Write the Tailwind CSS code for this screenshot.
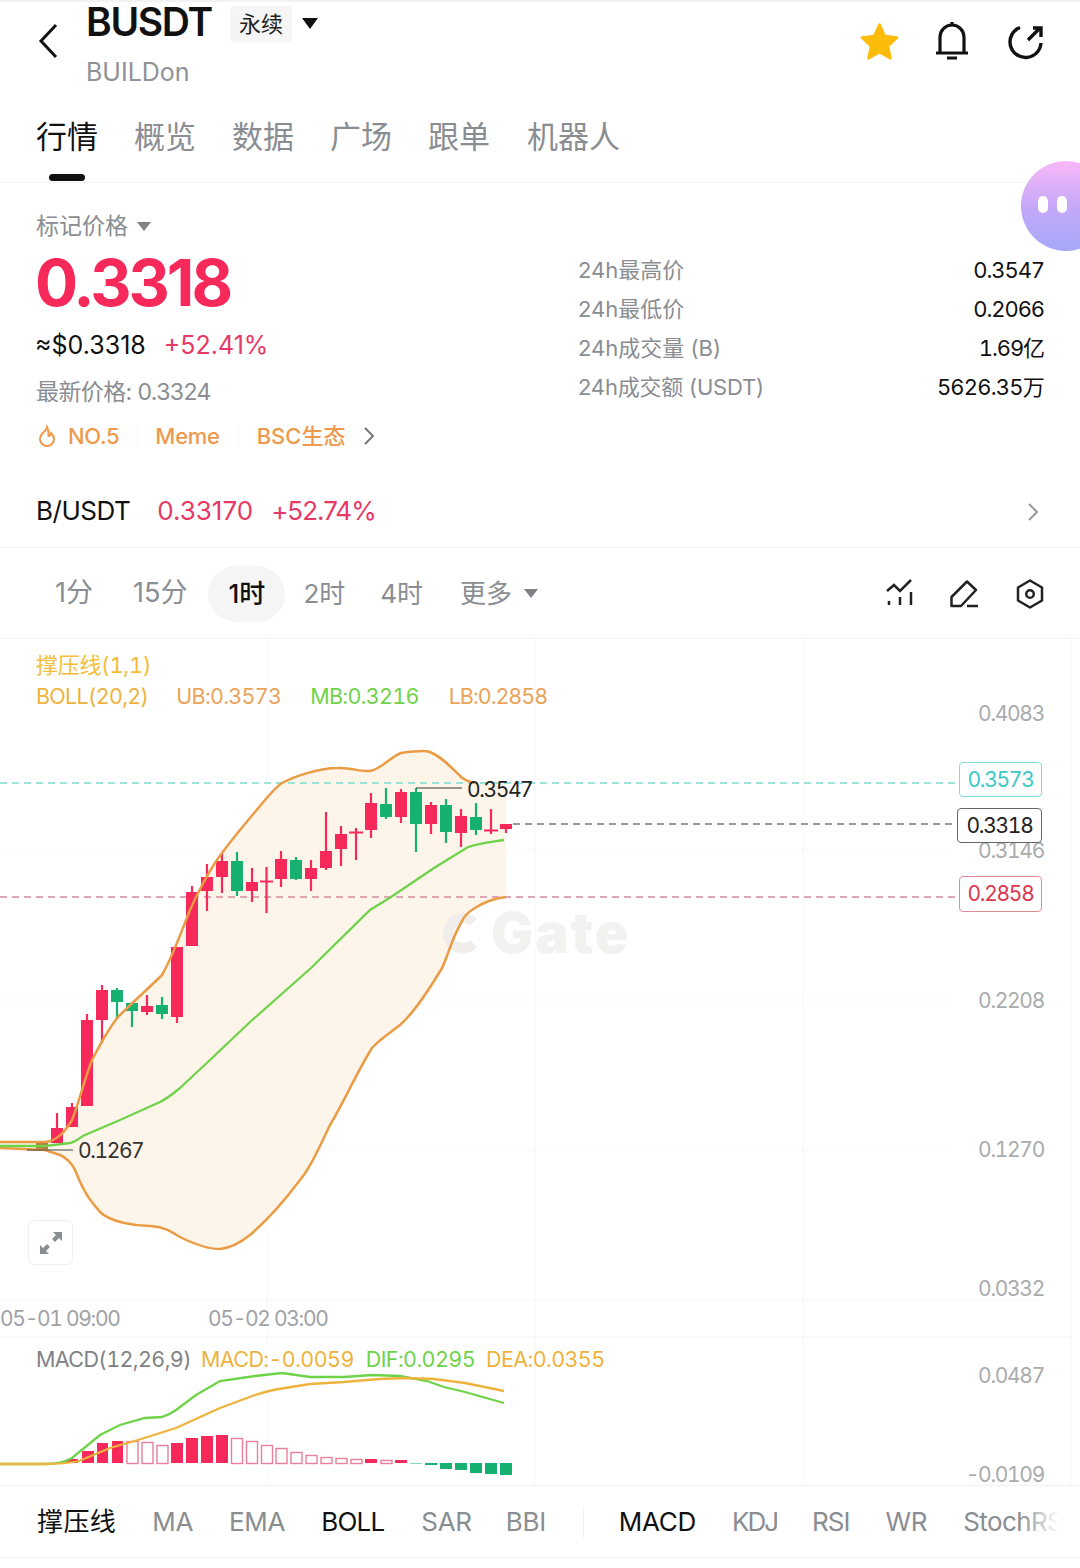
<!DOCTYPE html>
<html><head><meta charset="utf-8"><script src="https://cdn.jsdelivr.net/npm/@tailwindcss/browser@4"></script></head>
<body class="bg-white">
<div class="relative w-[1080px] h-[1568px] overflow-hidden bg-white text-[#111] font-['Inter','Noto_Sans_CJK_SC',sans-serif]">
  <div class="h-[2px] bg-[#f3f3f3]"></div>
  <!-- header -->
  <header class="h-[108px] flex items-start pl-[36px] pr-[36px]">
    <svg class="mt-[21px] w-[26px] h-[36px]" viewBox="0 0 26 36" fill="none" stroke="#111" stroke-width="3"><path d="M20 2 L5 18 L20 34"/></svg>
    <div class="ml-[24px] flex flex-col">
      <div class="flex items-center h-[40px]">
        <span class="text-[39px] font-semibold tracking-[-1.300px] leading-[40px]">BUSDT</span>
        <span class="ml-[18px] mt-[4px] w-[62px] h-[36px] rounded-[4px] bg-[#f5f5f5] text-[22px] flex items-center justify-center text-[#222]">永续</span>
        <span class="ml-[10px] mt-[3px] w-0 h-0 border-x-[8px] border-x-transparent border-t-[11px] border-t-[#111]"></span>
      </div>
      <span class="mt-[14px] text-[25px] text-[#8f9296] leading-[32px]">BUILDon</span>
    </div>
    <div class="ml-auto mt-[19px] flex items-center">
      <svg class="w-[41px] h-[40px]" viewBox="0 0 24 24" fill="#fcbc0a"><path d="M12 1.500 l3.200 6.900 7.400.9-5.500 5.100 1.500 7.400-6.600-3.700-6.600 3.700 1.500-7.400-5.500-5.100 7.400-.9z" stroke="#fcbc0a" stroke-width="1.500" stroke-linejoin="round"/></svg>
      <svg class="ml-[32px] w-[40px] h-[42px]" viewBox="0 0 40 42" fill="none" stroke="#111" stroke-width="3.200"><path d="M4 32h32M8 32V16a12 12 0 0 1 24 0v16" stroke-linejoin="round"/><path d="M20 1v4M15 37h10"/></svg>
      <svg class="ml-[36px] w-[36px] h-[36px]" viewBox="0 0 36 36" fill="none" stroke="#111" stroke-width="3.400"><path d="M12 3.500A15.500 15.500 0 1 0 33 19M20 16 32 4M25 4h8v9"/></svg>
    </div>
  </header>
  <!-- tabs -->
  <nav class="relative h-[73px] border-b border-[#f2f2f2] pl-[36px] flex gap-[36px] text-[31px] text-[#8a8d91]">
    <span class="text-[#111] leading-[54px]">行情</span><span class="leading-[54px]">概览</span><span class="leading-[54px]">数据</span><span class="leading-[54px]">广场</span><span class="leading-[54px]">跟单</span><span class="ml-[1px] leading-[54px]">机器人</span>
    <span class="absolute left-[49px] bottom-[1px] w-[36px] h-[7px] bg-[#111] rounded-[4px]"></span>
  </nav>
  <!-- price -->
  <section class="h-[290px] pl-[36px] pr-[36px] flex">
    <div class="w-[542px] flex flex-col">
      <div class="mt-[26px] flex items-center text-[23px] leading-[34px] text-[#8a8d91]">标记价格<span class="ml-[9px] w-0 h-0 border-x-[7px] border-x-transparent border-t-[9px] border-t-[#808285]"></span></div>
      <div class="mt-[7px] -ml-[1px] text-[64px] leading-[66px] font-bold text-[#f7295a] tracking-[-3px]">0.3318</div>
      <div class="mt-[11px] flex text-[25px] leading-[36px]"><span class="-ml-[1px]">≈$0.3318</span><span class="ml-[18px] text-[#e63a66]">+52.41%</span></div>
      <div class="mt-[12px] text-[23px] leading-[34px] text-[#8a8d91] tracking-[-0.600px]">最新价格: 0.3324</div>
      <div class="mt-[10px] flex items-center text-[22px] leading-[34px] text-[#ee9a4d] font-medium tracking-[-0.300px]">
        <svg class="ml-[2px] w-[18px] h-[22px] mr-[12px]" viewBox="0 0 18 22" fill="none" stroke="#ee9a4d" stroke-width="2"><path d="M9 2c0 4-7 6-7 12a7 7 0 0 0 14 0c0-3-2-5-3-6-.500 2-1.500 3-2.500 3 0-3 .500-6-1.500-9z"/></svg>
        <span>NO.5</span><span class="ml-[18px] w-px h-[24px] bg-[#f5f5f5]"></span><span class="ml-[17px]">Meme</span><span class="ml-[18px] w-px h-[24px] bg-[#f5f5f5]"></span><span class="ml-[18px] tracking-[0px]">BSC生态</span>
        <svg class="ml-[18px] w-[12px] h-[20px]" viewBox="0 0 12 20" fill="none" stroke="#777" stroke-width="2"><path d="M2 2l8 8-8 8"/></svg>
      </div>
    </div>
    <div class="flex-1 pt-[68px] flex flex-col text-[22px] leading-[39px]">
      <div class="flex justify-between"><span class="text-[#8a8d91]">24h最高价</span><span class="tabular-nums tracking-[-1.100px]">0.3547</span></div>
      <div class="flex justify-between"><span class="text-[#8a8d91]">24h最低价</span><span class="tabular-nums tracking-[-1.100px]">0.2066</span></div>
      <div class="flex justify-between"><span class="text-[#8a8d91]">24h成交量 (B)</span><span class="tabular-nums tracking-[-1.100px]">1.69亿</span></div>
      <div class="flex justify-between"><span class="text-[#8a8d91] tracking-[-0.200px]">24h成交额 (USDT)</span><span class="tabular-nums tracking-[-0.800px]">5626.35万</span></div>
    </div>
  </section>
  <!-- spot -->
  <section class="h-[75px] border-b border-[#f2f2f2] pl-[36px] pr-[42px] pt-[1px] flex items-center text-[26px]">
    <span class="tracking-[-0.500px]">B/USDT</span><span class="ml-[27px] text-[#e63a66]">0.33170</span><span class="ml-[18px] text-[#e63a66] tracking-[-1px]">+52.74%</span>
    <svg class="ml-auto mt-[2px] w-[10px] h-[18px]" viewBox="0 0 10 18" fill="none" stroke="#999" stroke-width="2"><path d="M1 1l8 8-8 8"/></svg>
  </section>
  <!-- timeframes -->
  <section class="h-[91px] border-b border-[#f2f2f2] pl-[36px] pr-[36px] pt-[1px] flex items-center text-[27px] text-[#8a8d91]">
    <span class="ml-[19px]">1分</span><span class="ml-[40px]">15分</span>
    <span class="ml-[21px] w-[77px] h-[56px] rounded-full bg-[#f5f5f5] text-[26px] text-[#111] font-medium flex items-center justify-center">1时</span>
    <span class="ml-[18px] text-[26px]">2时</span><span class="ml-[35px] text-[26px]">4时</span><span class="ml-[37px] text-[26px]">更多</span>
    <span class="ml-[12px] w-0 h-0 border-x-[7px] border-x-transparent border-t-[9px] border-t-[#808285]"></span>
    <div class="ml-auto flex items-center gap-[36px]">
      <svg class="w-[28px] h-[30px]" viewBox="0 0 28 30" fill="none" stroke="#222" stroke-width="2.500"><path d="M1 12l7-6 6 6 11-11M3 22v4M14 18v8M25 13v13"/></svg>
      <svg class="w-[30px] h-[30px]" viewBox="0 0 30 30" fill="none" stroke="#222" stroke-width="2.500" stroke-linejoin="round"><path d="M1.500 27V18L17 2.500l9 8.500L11 27zM17 27h11"/></svg>
      <svg class="w-[28px] h-[30px]" viewBox="0 0 28 30" fill="none" stroke="#222" stroke-width="2.500" stroke-linejoin="round"><path d="M14 1.500l12 7v13l-12 7-12-7v-13z"/><circle cx="14" cy="15" r="3.800"/></svg>
    </div>
  </section>
  <!-- chart -->
  <section class="relative h-[847px] border-b border-[#f2f2f2]">
    <svg class="absolute left-0 top-0" width="1080" height="847" viewBox="0 639 1080 847" fill="none">
      <path d="M267 639V1485M535 639V1485M803 639V1485M1071 639V1485M0 850H950M0 1000H950M0 1150H950M0 1300H1040M0 1337H1072" stroke="#f7f7f7"/>
      <path d="M0 1142L45 1142C58 1141 66 1130 72 1120C78 1105 85 1078 92 1060C100 1045 110 1025 120 1015C132 1003 152 985 162 975C172 958 180 935 190 910C200 888 212 866 222 853C235 835 250 818 265 800C272 792 276 787 282 783C295 776 320 768 337 768C350 767 360 772 370 771C380 770 392 756 401 753C415 751 425 750 430 752C442 757 452 768 461 777C468 782 490 784 506 784L506 897C495 898 482 903 475 908C468 912 463 918 461 923C452 938 448 956 442 968C430 988 415 1012 400 1025C390 1033 380 1039 372 1048C358 1070 345 1100 330 1125C318 1150 310 1168 300 1180C285 1200 270 1218 250 1235C240 1243 230 1248 220 1249C205 1249 190 1242 180 1237C170 1231 165 1227 150 1226C135 1226 110 1222 100 1212C90 1200 85 1195 75 1170C72 1163 65 1157 60 1155L45 1150L0 1148Z" fill="#fdf4ea"/>
      <circle cx="463" cy="933" r="15" stroke="#efeeea" stroke-width="10" stroke-dasharray="70 24" transform="rotate(45 463 933)"/>
      <text x="491" y="953" class="font-['Inter',sans-serif]" font-size="56" font-weight="900" fill="#f2f2f0" letter-spacing="2">Gate</text>
      <path d="M0 783H957" stroke="#7fdccf" stroke-width="1.500" stroke-dasharray="7 5"/>
      <path d="M0 897H957" stroke="#d48aa0" stroke-width="1.500" stroke-dasharray="7 5"/>
      <path d="M513 824H957" stroke="#777" stroke-width="1.500" stroke-dasharray="7 5"/>
      <!-- candles: red -->
      <rect x="36" y="1143" width="12" height="6" fill="#b07a40"/>
      <g stroke="#f7295a" stroke-width="2.200">
        <path d="M57 1113V1143M72 1103V1127M87 1014V1106M102 985V1043M147 995V1015M177 947V1023M192 886V946M207 864V911M222 853V893M252 868V902M266.500 867V913M281 851V887M311 860V891M326 812V870M341 826V866M356 828V860M371 793V838M401 789V823M431 802V834M461 809V847M491 809V834M506 824V833"/>
        <path d="M260 881.500H273M349 832.500H363M484 830.500H498"/>
      </g>
      <g fill="#f7295a">
        <rect x="51" y="1128" width="12" height="15"/><rect x="66" y="1107" width="12" height="20"/><rect x="81" y="1020" width="12" height="86"/><rect x="96" y="990" width="12" height="30"/><rect x="141" y="1006" width="12" height="6"/><rect x="171" y="947" width="12" height="70"/><rect x="186" y="892" width="12" height="54"/><rect x="201" y="877" width="12" height="14"/><rect x="216" y="861" width="12" height="16"/><rect x="246" y="882" width="12" height="9"/><rect x="275" y="859" width="12" height="20"/><rect x="305" y="868" width="12" height="11"/><rect x="320" y="851" width="12" height="17"/><rect x="335" y="834" width="12" height="15"/><rect x="365" y="803" width="12" height="27"/><rect x="395" y="792" width="12" height="25"/><rect x="425" y="805" width="12" height="19"/><rect x="455" y="816" width="12" height="17"/><rect x="500" y="824" width="12" height="5"/>
      </g>
      <g stroke="#16b070" stroke-width="2.200">
        <path d="M117 988V1018M132 1002V1027M162 997V1019M237 852V896M296 857V880M386 788V819M416 788V852M446 799V843M476 803V835"/>
      </g>
      <g fill="#16b070">
        <rect x="111" y="990" width="12" height="12"/><rect x="126" y="1003" width="12" height="8"/><rect x="156" y="1005" width="12" height="9"/><rect x="231" y="861" width="12" height="30"/><rect x="290" y="860" width="12" height="19"/><rect x="380" y="804" width="12" height="13"/><rect x="410" y="792" width="12" height="32"/><rect x="440" y="805" width="12" height="27"/><rect x="470" y="817" width="12" height="13"/>
      </g>
      <!-- boll lines -->
      <path d="M0 1142L45 1142C58 1141 66 1130 72 1120C78 1105 85 1078 92 1060C100 1045 110 1025 120 1015C132 1003 152 985 162 975C172 958 180 935 190 910C200 888 212 866 222 853C235 835 250 818 265 800C272 792 276 787 282 783C295 776 320 768 337 768C350 767 360 772 370 771C380 770 392 756 401 753C415 751 425 750 430 752C442 757 452 768 461 777C465 780 468 782 475 783" stroke="#ea9c45" stroke-width="2.500"/>
      <path d="M0 1148L45 1150L60 1155C65 1157 72 1163 75 1170C85 1195 90 1200 100 1212C110 1222 135 1226 150 1226C165 1227 170 1231 180 1237C190 1242 205 1249 220 1249C230 1248 240 1243 250 1235C270 1218 285 1200 300 1180C310 1168 318 1150 330 1125C345 1100 358 1070 372 1048C380 1039 390 1033 400 1025C415 1012 430 988 442 968C448 956 452 938 461 923C463 918 468 912 475 908C482 903 495 898 506 897" stroke="#ea9c45" stroke-width="2.500"/>
      <path d="M0 1146H45L70 1143C76 1142 80 1137 85 1135L120 1120L160 1102C168 1098 174 1093 180 1088L210 1060L250 1022L311 968L370 910L391 897L434 868L468 847C480 843 492 842 504 840" stroke="#6fd34a" stroke-width="2.300"/>
      <!-- leader lines -->
      <path d="M416 788H462" stroke="#333" stroke-width="1.200"/>
      <path d="M27 1150H73" stroke="#444" stroke-width="1.200"/>
      <!-- MACD bars -->
      <g fill="#f7295a">
        <rect x="66" y="1459" width="12" height="4"/><rect x="82" y="1451" width="12" height="12"/><rect x="97" y="1443" width="11" height="20"/><rect x="112" y="1441" width="11" height="22"/><rect x="171" y="1443" width="12" height="20"/><rect x="186" y="1438" width="12" height="25"/><rect x="201" y="1436" width="12" height="27"/><rect x="216" y="1435" width="12" height="28"/><rect x="365" y="1459" width="12" height="4"/><rect x="395" y="1460" width="12" height="3"/>
      </g>
      <g stroke="#ea7f9b" stroke-width="1.400" fill="#fff">
        <rect x="127" y="1441.500" width="11" height="22"/><rect x="142" y="1442.500" width="11" height="21"/><rect x="157" y="1445.500" width="11" height="18"/><rect x="231.500" y="1438.500" width="11" height="25"/><rect x="246.500" y="1441.500" width="11" height="22"/><rect x="261.500" y="1445.500" width="11" height="18"/><rect x="276" y="1448.500" width="11" height="15"/><rect x="291" y="1452.500" width="11" height="11"/><rect x="306" y="1455.500" width="11" height="8"/><rect x="321" y="1457.500" width="11" height="6"/><rect x="336" y="1458.500" width="11" height="5"/><rect x="351" y="1459.500" width="11" height="4"/><rect x="381" y="1460.500" width="11" height="3"/>
      </g>
      <g fill="#16b070">
        <rect x="410" y="1463" width="12" height="1" opacity=".5"/><rect x="425" y="1463" width="12" height="2"/><rect x="440" y="1463" width="12" height="6"/><rect x="455" y="1463" width="12" height="7"/><rect x="470" y="1463" width="12" height="10"/><rect x="485" y="1463" width="12" height="11"/><rect x="500" y="1463" width="12" height="12"/>
      </g>
      <path d="M0 1464H45C55 1464 65 1462 72 1458L100 1435L120 1425L145 1418L162 1417C168 1415 172 1413 176 1410L196 1395L220 1381L255 1376L282 1373L310 1377H344L372 1375L400 1376L427 1381L444 1387L465 1392L504 1403" stroke="#6fd34a" stroke-width="2.300"/>
      <path d="M0 1464H45C60 1464 70 1463 79 1461L110 1448L138 1440L176 1428L220 1408L255 1395C265 1392 272 1390 279 1389L310 1384L344 1382L379 1379L406 1378L434 1379L465 1383L504 1391" stroke="#eeb33c" stroke-width="2.300"/>
    </svg>
    <!-- labels over chart -->
    <div class="absolute left-[36px] top-[11px] text-[22px] leading-[30px] text-[#f4bd38] tabular-nums tracking-[-0.300px]">撑压线(1,1)</div>
    <div class="absolute left-[36px] top-[42px] flex text-[21.500px] leading-[30px] tracking-[-0.700px] tabular-nums whitespace-nowrap">
      <span class="text-[#eeb33c]">BOLL(20,2)</span><span class="ml-[28px] text-[#e9a45a]">UB:0.3573</span><span class="ml-[29px] text-[#6fd34a]">MB:0.3216</span><span class="ml-[30px] text-[#e9a45a] tracking-[-1px]">LB:0.2858</span>
    </div>
    <span class="absolute right-[36px] top-[60px] text-[21px] leading-[30px] text-[#a9abae] tabular-nums tracking-[-1.300px]">0.4083</span>
    <span class="absolute right-[36px] top-[197px] text-[21px] leading-[30px] text-[#a9abae] tabular-nums tracking-[-1.300px]">0.3146</span>
    <span class="absolute right-[36px] top-[347px] text-[21px] leading-[30px] text-[#a9abae] tabular-nums tracking-[-1.300px]">0.2208</span>
    <span class="absolute right-[36px] top-[496px] text-[21px] leading-[30px] text-[#a9abae] tabular-nums tracking-[-1.300px]">0.1270</span>
    <span class="absolute right-[36px] top-[635px] text-[21px] leading-[30px] text-[#a9abae] tabular-nums tracking-[-1.300px]">0.0332</span>
    <span class="absolute right-[36px] top-[722px] text-[21px] leading-[30px] text-[#a9abae] tabular-nums tracking-[-1.300px]">0.0487</span>
    <span class="absolute right-[36px] top-[821px] text-[21px] leading-[30px] text-[#a9abae] tabular-nums tracking-[-1.300px]">-0.0109</span>
    <span class="absolute left-[959px] top-[123px] w-[83px] h-[35px] rounded-[4px] border border-[#7fdfd6] bg-white text-[21px] text-[#3cc9c6] flex items-center justify-center tabular-nums tracking-[-1.300px]">0.3573</span>
    <span class="absolute left-[957px] top-[169px] w-[85px] h-[35px] rounded-[4px] border border-[#666] bg-white text-[21px] text-[#222] flex items-center justify-center tabular-nums tracking-[-1.300px]">0.3318</span>
    <span class="absolute left-[959px] top-[237px] w-[83px] h-[36px] rounded-[4px] border border-[#e28b94] bg-white text-[21px] text-[#d8394f] flex items-center justify-center tabular-nums tracking-[-1.300px]">0.2858</span>
    <span class="absolute left-[467px] top-[136px] text-[21px] leading-[30px] text-[#222] tabular-nums tracking-[-1.400px]">0.3547</span>
    <span class="absolute left-[78px] top-[497px] text-[21px] leading-[30px] text-[#333] tabular-nums tracking-[-1.400px]">0.1267</span>
    <span class="absolute left-[28px] top-[581px] w-[45px] h-[45px] rounded-[6px] border border-[#f0f0f0] bg-white flex items-center justify-center">
      <svg class="w-[24px] h-[24px]" viewBox="0 0 24 24" fill="#8a8d91"><path d="M14 1h9v9l-3-3-4 4-3-3 4-4zM10 23H1v-9l3 3 4-4 3 3-4 4z"/></svg>
    </span>
    <span class="absolute left-0 top-[665px] text-[21px] leading-[30px] text-[#a0a2a5] tabular-nums tracking-[-1.300px]">05-01 09:00</span>
    <span class="absolute left-[208px] top-[665px] text-[21px] leading-[30px] text-[#a0a2a5] tabular-nums tracking-[-1.300px]">05-02 03:00</span>
    <div class="absolute left-[36px] top-[705px] flex text-[21.500px] leading-[30px] tracking-[-0.600px] tabular-nums whitespace-nowrap">
      <span class="text-[#7f8285]">MACD(12,26,9)</span><span class="ml-[10px] text-[#eeb33c]">MACD:-0.0059</span><span class="ml-[12px] text-[#6fd34a]">DIF:0.0295</span><span class="ml-[11px] text-[#eeb33c]">DEA:0.0355</span>
    </div>
  </section>
  <!-- indicators -->
  <nav class="h-[72px] border-b border-[#f5f5f5] pl-[37px] flex items-center text-[26px] text-[#8a8d91] whitespace-nowrap overflow-hidden tracking-[-0.300px]">
    <span class="text-[#111] tracking-[0.400px]">撑压线</span><span class="ml-[36px]">MA</span><span class="ml-[36px]">EMA</span><span class="ml-[36px] text-[#111] tracking-[-0.800px]">BOLL</span><span class="ml-[37px]">SAR</span><span class="ml-[34px]">BBI</span>
    <span class="ml-[37px] w-px h-[32px] bg-[#f0f0f0]"></span>
    <span class="ml-[35px] text-[#111]">MACD</span><span class="ml-[36px] tracking-[-2px]">KDJ</span><span class="ml-[35px] tracking-[-1px]">RSI</span><span class="ml-[36px]">WR</span><span class="ml-[36px] tracking-[-0.600px]">StochRSI</span>
  </nav>
  <span class="absolute right-0 top-[1490px] w-[60px] h-[66px] bg-gradient-to-r from-white/0 via-white via-65% to-white"></span>
  <!-- mascot -->
  <div class="absolute left-[1021px] top-[161px] w-[90px] h-[90px] rounded-full bg-gradient-to-b from-[#f8b8f8] via-[#c6a8f8] to-[#a4a8fa]">
    <span class="absolute left-[17px] top-[35px] w-[10px] h-[17px] rounded-full bg-white"></span>
    <span class="absolute left-[36px] top-[35px] w-[10px] h-[17px] rounded-full bg-white"></span>
  </div>
</div>
</body></html>
